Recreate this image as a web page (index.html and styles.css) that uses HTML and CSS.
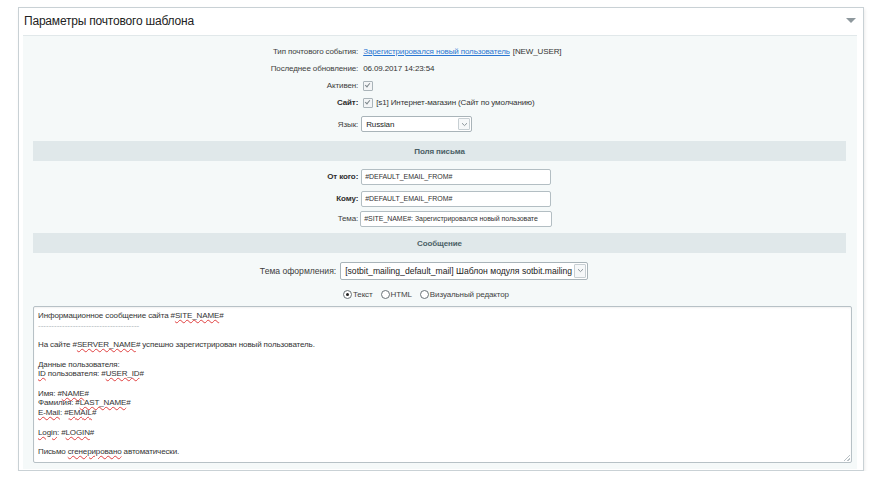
FILE: index.html
```html
<!DOCTYPE html>
<html lang="ru">
<head>
<meta charset="utf-8">
<title>Параметры почтового шаблона</title>
<link rel="stylesheet" href="styles.css">
</head>
<body>
<div class="panel">
  <div class="panel-head">
    <span class="panel-title">Параметры почтового шаблона</span>
    <span class="collapse"></span>
  </div>
  <div class="panel-body">
    <div class="row r-text">
      <div class="lbl">Тип почтового события:</div>
      <div class="val txt"><a href="#" class="link">Зарегистрировался новый пользователь</a> [NEW_USER]</div>
    </div>
    <div class="row r-text">
      <div class="lbl">Последнее обновление:</div>
      <div class="val txt">06.09.2017 14:23:54</div>
    </div>
    <div class="row r-text">
      <div class="lbl">Активен:</div>
      <div class="val txt"><span class="chk"></span></div>
    </div>
    <div class="row r-text">
      <div class="lbl b">Сайт:</div>
      <div class="val txt"><span class="chk"></span> [s1] Интернет-магазин (Сайт по умолчанию)</div>
    </div>
    <div class="row r-sel">
      <div class="lbl">Язык:</div>
      <div class="val"><span class="select sel-lang"><span class="sel-text">Russian</span><span class="sel-btn"><svg width="7" height="5" viewBox="0 0 7 5"><path d="M1 1.2 L3.5 3.6 L6 1.2" fill="none" stroke="#8c969b" stroke-width="1"/></svg></span></span></div>
    </div>

    <div class="band band-1">Поля письма</div>

    <div class="row r-in1">
      <div class="lbl b">От кого:</div>
      <div class="val"><span class="input">#DEFAULT_EMAIL_FROM#</span></div>
    </div>
    <div class="row r-in2">
      <div class="lbl b">Кому:</div>
      <div class="val"><span class="input">#DEFAULT_EMAIL_FROM#</span></div>
    </div>
    <div class="row r-in3">
      <div class="lbl">Тема:</div>
      <div class="val shift"><span class="input wide">#SITE_NAME#: Зарегистрировался новый пользовате</span></div>
    </div>

    <div class="band band-2">Сообщение</div>

    <div class="row r-theme">
      <div class="lbl">Тема оформления:</div>
      <div class="val"><span class="select sel-theme"><span class="sel-text">[sotbit_mailing_default_mail] Шаблон модуля sotbit.mailing</span><span class="sel-btn"><svg width="7" height="5" viewBox="0 0 7 5"><path d="M1 1.2 L3.5 3.6 L6 1.2" fill="none" stroke="#8c969b" stroke-width="1"/></svg></span></span></div>
    </div>

    <div class="radios">
      <label class="radio"><span class="rb on"></span>Текст</label>
      <label class="radio"><span class="rb"></span>HTML</label>
      <label class="radio"><span class="rb"></span>Визуальный редактор</label>
    </div>

    <div class="textarea">
      <div class="ln">Информационное сообщение сайта #<span class="sp">SITE_NAME</span>#</div>
      <div class="ln dash">--------------------------------------</div>
      <div class="ln">&nbsp;</div>
      <div class="ln">На сайте #<span class="sp">SERVER_NAME</span># успешно зарегистрирован новый пользователь.</div>
      <div class="ln">&nbsp;</div>
      <div class="ln">Данные пользователя:</div>
      <div class="ln"><span class="sp">ID</span> пользователя: #<span class="sp">USER_ID</span>#</div>
      <div class="ln">&nbsp;</div>
      <div class="ln">Имя: #<span class="sp">NAME</span>#</div>
      <div class="ln">Фамилия: #<span class="sp">LAST_NAME</span>#</div>
      <div class="ln"><span class="sp">E-Mail</span>: #<span class="sp">EMAIL</span>#</div>
      <div class="ln">&nbsp;</div>
      <div class="ln"><span class="sp">Login</span>: #<span class="sp">LOGIN</span>#</div>
      <div class="ln">&nbsp;</div>
      <div class="ln">Письмо <span class="sp">сгенерировано</span> автоматически.</div>
      <span class="grip"></span>
    </div>
  </div>
</div>
</body>
</html>
```

FILE: styles.css
```css
html, body {
  margin: 0;
  padding: 0;
  background: #ffffff;
}
body {
  font-family: "Liberation Sans", Arial, sans-serif;
  color: #333;
  letter-spacing: -0.12px;
}
.panel {
  margin: 7px 0 0 18px;
  width: 844px;
  border: 1px solid #c9d1d5;
  background: #fff;
  box-shadow: 1px 2px 3px rgba(0, 0, 0, 0.08);
}
.panel-head {
  height: 27px;
  display: flex;
  align-items: center;
  justify-content: space-between;
  padding: 0 7px 0 5px;
}
.panel-title {
  font-size: 12px;
  letter-spacing: -0.2px;
  color: #222;
  position: relative;
  top: -1px;
}
.collapse {
  width: 0;
  height: 0;
  border-left: 5px solid transparent;
  border-right: 5px solid transparent;
  border-top: 5px solid #8e989d;
  position: relative;
  top: -1px;
}
.panel-body {
  margin: 0 6px 1px 4px;
  background: #f5f9f9;
  border-top: 1px solid #e1e8ea;
  padding: 7px 11px 6px 10px;
  font-size: 8px;
}
.row {
  display: grid;
  grid-template-columns: calc(40% + 3px) 1fr;
  align-items: center;
}
.lbl {
  text-align: right;
  padding-right: 3px;
  color: #3d3d3d;
  white-space: nowrap;
}
.lbl.b { font-weight: bold; color: #2e2e2e; }
.val {
  color: #333;
  white-space: nowrap;
  display: flex;
  align-items: center;
  gap: 3px;
}
.val.txt { padding-left: 2px; }
.link { color: #2a76d2; }
.r-text { height: 17px; }
.r-sel { height: 22px; margin-top: 2px; }
.chk {
  display: inline-block;
  width: 8px;
  height: 8px;
  border: 1px solid #aab4b9;
  border-radius: 1px;
  background: #f3f5f6;
  position: relative;
}
.chk::after {
  content: "";
  position: absolute;
  left: 2px;
  top: 0px;
  width: 2px;
  height: 4px;
  border: solid #7d878c;
  border-width: 0 1px 1px 0;
  transform: rotate(40deg);
}
.select {
  display: inline-flex;
  align-items: stretch;
  height: 16px;
  box-sizing: border-box;
  border: 1px solid #a9b4b9;
  border-radius: 2px;
  background: #fff;
}
.sel-lang { width: 111px; }
.sel-theme { width: 248px; height: 18px; font-size: 8.6px; letter-spacing: 0; }
.sel-text {
  flex: 1;
  padding-left: 4px;
  display: flex;
  align-items: center;
  color: #222;
  overflow: hidden;
}
.sel-btn {
  width: 10px;
  margin: 1px;
  border: 1px solid #c7cfd3;
  border-radius: 1px;
  background: #f6f8f9;
  display: flex;
  align-items: center;
  justify-content: center;
}
.band {
  height: 20px;
  background: #e0e8ea;
  display: flex;
  align-items: center;
  justify-content: center;
  font-weight: bold;
  color: #4b5f66;
}
.band-1 { margin-top: 6px; }
.input {
  display: inline-flex;
  align-items: center;
  box-sizing: border-box;
  width: 190px;
  height: 16px;
  border: 1px solid #b3bec3;
  border-radius: 2px;
  background: #fff;
  padding-left: 3px;
  font-size: 7px;
  letter-spacing: -0.05px;
  color: #333;
  overflow: hidden;
  white-space: nowrap;
}
.input.wide { width: 192px; }
.shift { margin-left: -1px; }
.r-in1 { margin-top: 7px; height: 17px; }
.r-in2 { margin-top: 5px; height: 17px; }
.r-in3 { margin-top: 3px; height: 17px; }
.band-2 { margin-top: 6px; }
.r-theme {
  margin-top: 8px;
  height: 19px;
  grid-template-columns: calc(40% - 18px) 1fr;
}
.r-theme .lbl { font-size: 8.6px; letter-spacing: 0; padding-right: 4px; }
.radios {
  display: flex;
  justify-content: flex-start;
  gap: 8px;
  margin-top: 8px;
  height: 12px;
  align-items: center;
  padding-left: 310px;
}
.radio {
  display: inline-flex;
  align-items: center;
  color: #444;
}
.rb {
  display: inline-block;
  width: 7px;
  height: 7px;
  border: 1px solid #6a7378;
  border-radius: 50%;
  background: #fff;
  margin-right: 1px;
  position: relative;
}
.rb.on::after {
  content: "";
  position: absolute;
  left: 2px;
  top: 2px;
  width: 3px;
  height: 3px;
  border-radius: 50%;
  background: #222;
}
.textarea {
  position: relative;
  margin-top: 6px;
  margin-right: -6px;
  height: 157px;
  box-sizing: border-box;
  border: 1px solid #b7c1c6;
  border-radius: 2px;
  background: #fff;
  box-shadow: inset 0 1px 2px rgba(0, 0, 0, 0.06);
  padding: 4px 4px;
  font-size: 8px;
  line-height: 9.72px;
  color: #333;
}
.ln { white-space: nowrap; }
.dash { color: #aab2b6; letter-spacing: 0; }
.sp {
  text-decoration: underline wavy #e04040;
  text-decoration-thickness: 1px;
  text-underline-offset: 1px;
}
.grip {
  position: absolute;
  right: 1px;
  bottom: 1px;
  width: 6px;
  height: 6px;
  background: linear-gradient(135deg, transparent 45%, #b9c1c5 45%, #b9c1c5 55%, transparent 55%, transparent 75%, #b9c1c5 75%, #b9c1c5 85%, transparent 85%);
}
```
